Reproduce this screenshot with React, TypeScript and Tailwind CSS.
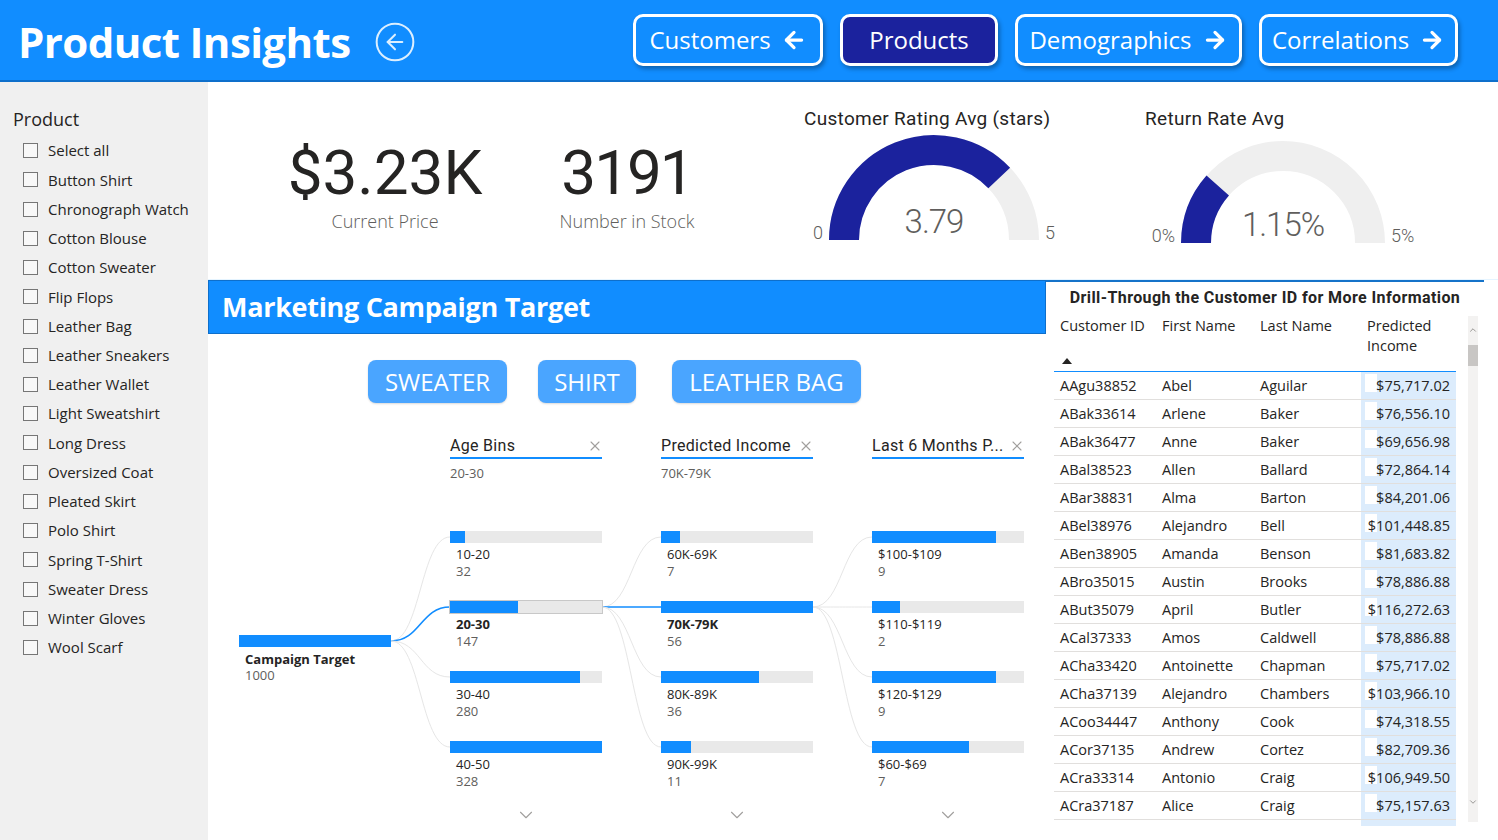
import React from "react";
import { ArrowLeft, ArrowRight, ChevronDown, ChevronUp, CircleArrowLeft, X } from "lucide-react";

const SEGOE = "font-['Open_Sans','Noto_Sans',sans-serif]";
const DIN = "font-['Roboto','Liberation_Sans',sans-serif]";

const products = [
  "Select all",
  "Button Shirt",
  "Chronograph Watch",
  "Cotton Blouse",
  "Cotton Sweater",
  "Flip Flops",
  "Leather Bag",
  "Leather Sneakers",
  "Leather Wallet",
  "Light Sweatshirt",
  "Long Dress",
  "Oversized Coat",
  "Pleated Skirt",
  "Polo Shirt",
  "Spring T-Shirt",
  "Sweater Dress",
  "Winter Gloves",
  "Wool Scarf",
];

const customers = [
  ["AAgu38852", "Abel", "Aguilar", "$75,717.02"],
  ["ABak33614", "Arlene", "Baker", "$76,556.10"],
  ["ABak36477", "Anne", "Baker", "$69,656.98"],
  ["ABal38523", "Allen", "Ballard", "$72,864.14"],
  ["ABar38831", "Alma", "Barton", "$84,201.06"],
  ["ABel38976", "Alejandro", "Bell", "$101,448.85"],
  ["ABen38905", "Amanda", "Benson", "$81,683.82"],
  ["ABro35015", "Austin", "Brooks", "$78,886.88"],
  ["ABut35079", "April", "Butler", "$116,272.63"],
  ["ACal37333", "Amos", "Caldwell", "$78,886.88"],
  ["ACha33420", "Antoinette", "Chapman", "$75,717.02"],
  ["ACha37139", "Alejandro", "Chambers", "$103,966.10"],
  ["ACoo34447", "Anthony", "Cook", "$74,318.55"],
  ["ACor37135", "Andrew", "Cortez", "$82,709.36"],
  ["ACra33314", "Antonio", "Craig", "$106,949.50"],
  ["ACra37187", "Alice", "Craig", "$75,157.63"],
];

type Node = { label: string; value: number; pct: number; bold?: boolean; outlined?: boolean };

const columns: { title: string; sub: string; nodes: Node[] }[] = [
  {
    title: "Age Bins",
    sub: "20-30",
    nodes: [
      { label: "10-20", value: 32, pct: 10 },
      { label: "20-30", value: 147, pct: 45, bold: true, outlined: true },
      { label: "30-40", value: 280, pct: 85.5 },
      { label: "40-50", value: 328, pct: 100 },
    ],
  },
  {
    title: "Predicted Income",
    sub: "70K-79K",
    nodes: [
      { label: "60K-69K", value: 7, pct: 12.5 },
      { label: "70K-79K", value: 56, pct: 100, bold: true },
      { label: "80K-89K", value: 36, pct: 64.3 },
      { label: "90K-99K", value: 11, pct: 19.6 },
    ],
  },
  {
    title: "Last 6 Months P...",
    sub: "",
    nodes: [
      { label: "$100-$109", value: 9, pct: 81.8 },
      { label: "$110-$119", value: 2, pct: 18.2 },
      { label: "$120-$129", value: 9, pct: 81.8 },
      { label: "$60-$69", value: 7, pct: 63.6 },
    ],
  },
];

function arc(cx: number, cy: number, r: number, f0: number, f1: number) {
  const p = (f: number) => {
    const a = Math.PI * (1 - f);
    return `${(cx + r * Math.cos(a)).toFixed(2)} ${(cy - r * Math.sin(a)).toFixed(2)}`;
  };
  return `M ${p(f0)} A ${r} ${r} 0 0 1 ${p(f1)}`;
}

const Gauge = ({
  title,
  value,
  frac,
  min,
  max,
  r,
  cx,
  cy,
}: {
  title: string;
  value: string;
  frac: number;
  min: string;
  max: string;
  r: number;
  cx: number;
  cy: number;
}) => (
  <div className="flex flex-col">
    <span className={`${DIN} text-[19px] leading-[22px] tracking-[0.3px] text-[#252423] whitespace-nowrap`}>{title}</span>
    <svg width="280" height="130" className="mt-[4px]">
      <path d={arc(cx, cy, r - 15, 0, 1)} stroke="#efefef" strokeWidth="30" fill="none" />
      <path d={arc(cx, cy, r - 15, 0, frac)} stroke="#1b229d" strokeWidth="30" fill="none" />
      <text
        x={cx}
        y={cy - 7}
        textAnchor="middle"
        fontFamily="Roboto"
        fontSize="33"
        fontWeight="300"
        letterSpacing="-1"
        fill="#605e5c"
      >
        {value}
      </text>
      <text x={cx - r - 6} y={cy - 1} textAnchor="end" fontFamily="Roboto" fontSize="18" fontWeight="300" fill="#605e5c">
        {min}
      </text>
      <text x={cx + r + 6} y={cy - 1} textAnchor="start" fontFamily="Roboto" fontSize="18" fontWeight="300" fill="#605e5c">
        {max}
      </text>
    </svg>
  </div>
);

// tree geometry, relative to the tree box (left = 239px, top = 435px on the page)
const COL_X = [0, 211, 422, 633];
const BAR_W = 152;
const ROOT_Y = 206;
const NODE_Y = [102, 172, 242, 312];

function curve(x1: number, y1: number, x2: number, y2: number) {
  const m = (x2 - x1) / 2;
  return `M ${x1} ${y1} C ${x1 + m} ${y1} ${x2 - m} ${y2} ${x2} ${y2}`;
}

const DecompTree = () => {
  const gray = "#e6e6e6";
  const blue = "#118dff";
  return (
    <div className="relative mt-[32px] ml-[31px] h-[398px] w-[786px]">
      <svg className="absolute inset-0" width="786" height="398">
        {NODE_Y.map((y, i) => (
          <path
            key={`a${i}`}
            d={curve(COL_X[0] + BAR_W, ROOT_Y, COL_X[1], y)}
            stroke={i === 1 ? blue : gray}
            strokeWidth={i === 1 ? 1.6 : 1}
            fill="none"
          />
        ))}
        {NODE_Y.map((y, i) => (
          <path
            key={`b${i}`}
            d={curve(COL_X[1] + BAR_W, NODE_Y[1], COL_X[2], y)}
            stroke={i === 1 ? blue : gray}
            strokeWidth={i === 1 ? 1.6 : 1}
            fill="none"
          />
        ))}
        {NODE_Y.map((y, i) => (
          <path key={`c${i}`} d={curve(COL_X[2] + BAR_W, NODE_Y[1], COL_X[3], y)} stroke={gray} strokeWidth="1" fill="none" />
        ))}
      </svg>

      <div className="relative flex gap-[59px]">
        {/* root */}
        <div className="w-[152px] pt-[200px]">
          <div className="h-[12px] bg-[#118dff]" />
          <div className={`${SEGOE} pl-[6px] pt-[4px] text-[13px] leading-[16px] font-bold text-[#252423]`}>Campaign Target</div>
          <div className={`${SEGOE} pl-[6px] text-[13px] leading-[16px] text-[#605e5c]`}>1000</div>
        </div>

        {columns.map((col) => (
          <div key={col.title} className="w-[152px] flex flex-col">
            <div className="flex h-[24px] items-center justify-between border-b-2 border-[#118dff]">
              <span className={`${DIN} text-[16px] tracking-[0.3px] text-[#252423] whitespace-nowrap`}>{col.title}</span>
              <X size={16} strokeWidth={1.6} className="text-[#a19f9d] mr-[-1px]" />
            </div>
            <div className={`${SEGOE} h-[18px] mt-[5px] text-[13px] leading-[18px] text-[#605e5c]`}>{col.sub}</div>
            <div className="mt-[49px] flex flex-col">
              {col.nodes.map((n) => (
                <div key={n.label} className="h-[70px]">
                  <div className={`h-[12px] bg-[#e9e9e9] ${n.outlined ? "outline outline-1 outline-[#c8c8c8]" : ""}`}>
                    <div className="h-full bg-[#118dff]" style={{ width: `${n.pct}%` }} />
                  </div>
                  <div
                    className={`${SEGOE} pl-[6px] pt-[3px] text-[13px] leading-[17px] ${
                      n.bold ? "font-bold text-[#252423]" : "text-[#252423]"
                    }`}
                  >
                    {n.label}
                  </div>
                  <div className={`${SEGOE} pl-[6px] text-[13px] leading-[17px] text-[#605e5c]`}>{n.value}</div>
                </div>
              ))}
            </div>
            <div className="mt-[-7px] flex justify-center">
              <ChevronDown size={22} strokeWidth={1.2} className="text-[#a19f9d]" />
            </div>
          </div>
        ))}
      </div>
    </div>
  );
};

const NavButton = ({ label, w, active, icon }: { label: string; w: string; active?: boolean; icon?: "left" | "right" }) => (
  <div
    className={`${w} h-[52px] flex items-center justify-center gap-[10px] rounded-[10px] border-[3px] border-white shadow-[2px_3px_4px_rgba(0,0,0,0.3)] ${
      active ? "bg-[#1b229d]" : "bg-[#118dff]"
    }`}
  >
    <span className={`${SEGOE} text-[24px] leading-none text-white`}>{label}</span>
    {icon === "left" && <ArrowLeft size={26} strokeWidth={3} className="text-white" />}
    {icon === "right" && <ArrowRight size={26} strokeWidth={3} className="text-white" />}
  </div>
);

export default function App() {
  return (
    <div className="w-[1498px] h-[840px] overflow-hidden flex flex-col bg-white">
      {/* header */}
      <div className="h-[82px] shrink-0 bg-[#118dff] border-b-2 border-[#0e6fcb] flex items-center pl-[18px] pr-[40px]">
        <h1 className={`${SEGOE} text-[42px] font-bold tracking-[-0.6px] text-white leading-none mt-[3px]`}>Product Insights</h1>
        <CircleArrowLeft size={44} strokeWidth={1.1} className="ml-[23px] mt-[3px] text-[#dcefff]" />
        <div className="ml-auto flex gap-[17px]">
          <NavButton label="Customers" w="w-[190px]" icon="left" />
          <NavButton label="Products" w="w-[158px]" active />
          <NavButton label="Demographics" w="w-[227px]" icon="right" />
          <NavButton label="Correlations" w="w-[199px]" icon="right" />
        </div>
      </div>

      <div className="flex flex-1 min-h-0">
        {/* slicer */}
        <div className="w-[208px] shrink-0 bg-[#f0f0f0] pt-[26px] pl-[13px]">
          <div className={`${SEGOE} text-[18px] leading-[22px] text-[#252423]`}>Product</div>
          <div className="mt-[6px] pl-[10px] flex flex-col">
            {products.map((p) => (
              <div key={p} className="h-[29.24px] flex items-center gap-[10px]">
                <div className="w-[15px] h-[15px] border border-[#767676] bg-[#f8f8f8]" />
                <span className={`${SEGOE} text-[15px] text-[#252423]`}>{p}</span>
              </div>
            ))}
          </div>
        </div>

        <div className="flex-1 flex flex-col min-w-0">
          {/* kpis and gauges */}
          <div className="h-[198px] shrink-0 flex border-b border-[#e5f4ff]">
            <div className="ml-[57px] w-[240px] pt-[56px] flex flex-col items-center">
              <span className={`${DIN} text-[62px] leading-[70px] text-[#252423]`}>$3.23K</span>
              <span className={`${SEGOE} text-[18px] font-light text-[#605e5c]`}>Current Price</span>
            </div>
            <div className="w-[244px] pt-[56px] flex flex-col items-center">
              <span className={`${DIN} text-[62px] leading-[70px] tracking-[-2px] text-[#252423]`}>3191</span>
              <span className={`${SEGOE} text-[18px] font-light text-[#605e5c]`}>Number in Stock</span>
            </div>
            <div className="ml-[55px] pt-[26px] w-[341px]">
              <Gauge title="Customer Rating Avg (stars)" value="3.79" frac={3.79 / 5} min="0" max="5" r={105} cx={130} cy={106} />
            </div>
            <div className="pt-[26px]">
              <Gauge title="Return Rate Avg" value="1.15%" frac={0.23} min="0%" max="5%" r={102} cx={138} cy={109} />
            </div>
          </div>

          <div className="flex flex-1 min-h-0">
            {/* marketing campaign */}
            <div className="w-[838px] shrink-0 flex flex-col">
              <div className="h-[54px] bg-[#118dff] border border-[#0e6fcb] flex items-center pl-[13px]">
                <span className={`${SEGOE} text-[27px] font-bold tracking-[-0.3px] text-white`}>Marketing Campaign Target</span>
              </div>
              <div className="mt-[26px] pl-[160px] flex">
                {[
                  ["SWEATER", "w-[139px]", "ml-0"],
                  ["SHIRT", "w-[98px]", "ml-[31px]"],
                  ["LEATHER BAG", "w-[189px]", "ml-[36px]"],
                ].map(([t, w, m]) => (
                  <div
                    key={t}
                    className={`${w} ${m} h-[43px] rounded-[8px] bg-[#4aa5ff] shadow-[0_1px_2px_rgba(0,0,0,0.15)] flex items-center justify-center`}
                  >
                    <span className={`${SEGOE} text-[24px] text-white`}>{t}</span>
                  </div>
                ))}
              </div>
              <DecompTree />
            </div>

            {/* drill-through table */}
            <div className="flex-1 min-w-0 flex flex-col">
              <div className="mr-[14px] border-t-2 border-[#1573c9]">
                <div className={`${DIN} text-center text-[16px] font-bold leading-[32px] tracking-[0.4px] text-[#252423]`}>
                  Drill-Through the Customer ID for More Information
                </div>
              </div>
              <div className="flex pl-[8px]">
                <div className="w-[402px]">
                  <div className={`${SEGOE} flex h-[58px] border-b border-[#118dff] text-[14.5px] text-[#252423] leading-[20px]`}>
                    <div className="w-[102px] pl-[6px] pt-[2px] flex flex-col justify-between pb-[7px]">
                      <span>Customer ID</span>
                      <svg width="10" height="6" className="ml-[2px]">
                        <path d="M0 6 L5 0 L10 6 Z" fill="#252423" />
                      </svg>
                    </div>
                    <div className="w-[98px] pl-[6px] pt-[2px]">First Name</div>
                    <div className="w-[107px] pl-[6px] pt-[2px]">Last Name</div>
                    <div className="w-[95px] pl-[6px] pt-[2px]">
                      Predicted
                      <br />
                      Income
                    </div>
                  </div>
                  {customers.map((c, i) => (
                    <div key={c[0] + i} className={`${SEGOE} flex h-[28px] border-b border-[#e1dfdd] text-[14.5px] text-[#252423]`}>
                      <div className="w-[102px] pl-[6px] flex items-center">{c[0]}</div>
                      <div className="w-[98px] pl-[6px] flex items-center">{c[1]}</div>
                      <div className="w-[107px] pl-[6px] flex items-center">{c[2]}</div>
                      <div className="w-[95px] bg-[#dcecfc] relative flex items-center justify-end pr-[6px]">
                        <div className="absolute left-[4px] top-[2px] w-[12px] h-[18px] bg-white" />
                        <span className="relative">{c[3]}</span>
                      </div>
                    </div>
                  ))}
                  <div className="flex h-[6px]">
                    <div className="w-[307px]" />
                    <div className="w-[95px] bg-[#dcecfc]" />
                  </div>
                </div>
                {/* scrollbar */}
                <div className="ml-[12px] mt-[2px] w-[10px] h-[506px] bg-[#f3f2f1] flex flex-col items-center">
                  <ChevronUp size={10} strokeWidth={1.5} className="mt-[9px] text-[#605e5c]" />
                  <div className="mt-[10px] w-[10px] h-[21px] bg-[#c8c6c4]" />
                  <div className="flex-1" />
                  <ChevronDown size={10} strokeWidth={1.5} className="mb-[15px] text-[#605e5c]" />
                </div>
              </div>
            </div>
          </div>
        </div>
      </div>
    </div>
  );
}
